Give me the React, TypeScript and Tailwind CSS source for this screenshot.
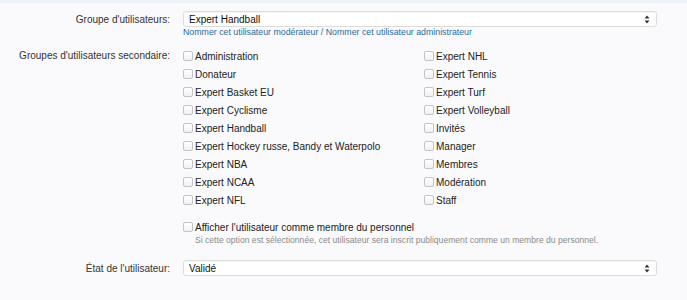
const left = [
  "Administration",
  "Donateur",
  "Expert Basket EU",
  "Expert Cyclisme",
  "Expert Handball",
  "Expert Hockey russe, Bandy et Waterpolo",
  "Expert NBA",
  "Expert NCAA",
  "Expert NFL",
];

const right = [
  "Expert NHL",
  "Expert Tennis",
  "Expert Turf",
  "Expert Volleyball",
  "Invités",
  "Manager",
  "Membres",
  "Modération",
  "Staff",
];

function Box() {
  return (
    <span className="inline-block w-[10px] h-[10px] rounded-[2px] border border-[#c4c4c4] bg-gradient-to-b from-white to-[#f1f1f1] shrink-0" />
  );
}

function Check({ label }: { label: string }) {
  return (
    <label className="flex items-center h-[18px] gap-[2px]">
      <Box />
      <span className="text-[#222]">{label}</span>
    </label>
  );
}

function Select({ value }: { value: string }) {
  return (
    <div className="w-[474px] h-[16px] flex items-center justify-between rounded-[3px] border border-[#dcdcdc] bg-white pl-[5px] pr-[6px] shadow-[inset_0_1px_1px_rgba(0,0,0,0.04)]">
      <span className="text-[#111]">{value}</span>
      <svg width="6" height="9" viewBox="0 0 6 9">
        <path d="M3 0.5 L5.5 3.5 H0.5 Z" fill="#333" />
        <path d="M3 8.5 L5.5 5.5 H0.5 Z" fill="#333" />
      </svg>
    </div>
  );
}

export default function App() {
  return (
    <div className="w-[687px] h-[300px] bg-[#fafafc] text-[10px] font-['Liberation_Sans',Arial,sans-serif] overflow-hidden">
      <div className="h-[3px] bg-[#edf2f8]" />

      <div className="grid grid-cols-[170px_1fr] gap-x-[13px] mt-[8px]">
        <div className="flex items-center justify-end h-[16px] text-[#333]">Groupe d'utilisateurs:</div>
        <Select value="Expert Handball" />

        <div />
        <div className="h-[12px] flex items-center text-[8.8px] text-[#2b6a9a]">
          Nommer cet utilisateur modérateur / Nommer cet utilisateur administrateur
        </div>

        <div className="flex items-start justify-end mt-[8px] h-[18px] leading-[18px] text-[#333]">
          Groupes d'utilisateurs secondaire:
        </div>
        <div className="grid grid-cols-[241px_1fr] mt-[8px]">
          <div>
            {left.map((l) => (
              <Check key={l} label={l} />
            ))}
          </div>
          <div>
            {right.map((l) => (
              <Check key={l} label={l} />
            ))}
          </div>
        </div>

        <div />
        <div className="mt-[9px]">
          <Check label="Afficher l'utilisateur comme membre du personnel" />
          <div className="h-[12px] -mt-[2px] pl-[12px] flex items-center text-[8.6px] text-[#8a8a8a]">
            Si cette option est sélectionnée, cet utilisateur sera inscrit publiquement comme un membre du personnel.
          </div>
        </div>

        <div className="flex items-center justify-end h-[16px] mt-[14px] text-[#333]">État de l'utilisateur:</div>
        <div className="mt-[14px]">
          <Select value="Validé" />
        </div>
      </div>
    </div>
  );
}
